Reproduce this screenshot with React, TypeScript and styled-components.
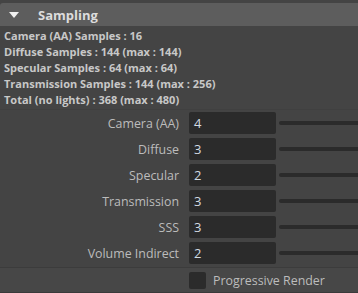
import React, { FC } from "react"
import styled, { createGlobalStyle } from "styled-components"

const GlobalStyle = createGlobalStyle`
    html, body {
        margin: 0;
        padding: 0;
        background: #444444;
        overflow: hidden;
    }
    body {
        font-family: "Open Sans", "Noto Sans", sans-serif;
    }
`

const Panel = styled.div`
    width: 358px;
    height: 293px;
    padding-top: 3px;
    box-sizing: border-box;
    background: #444444;
    display: flex;
    flex-direction: column;
`

const Header = styled.div`
    height: 23px;
    background: #5d5d5d;
    border-top-left-radius: 3px;
    display: flex;
    align-items: center;
    gap: 19px;
    padding-left: 9px;
    color: #dcdcdc;
    font-weight: 700;
    font-size: 13px;
`

const Arrow = styled.span`
    width: 0;
    height: 0;
    border-left: 5px solid transparent;
    border-right: 5px solid transparent;
    border-top: 6px solid #f0f0f0;
`

const Info = styled.div`
    padding: 2px 0 1px 4px;
    display: flex;
    flex-direction: column;
    border-bottom: 1px solid #404040;
`

const InfoLine = styled.div`
    height: 16px;
    line-height: 16px;
    font-size: 11px;
    font-weight: 700;
    color: #c8c8c8;
    white-space: nowrap;
`

const Rows = styled.div`
    padding-top: 2px;
    display: flex;
    flex-direction: column;
    gap: 4px;
`

const Row = styled.div`
    display: grid;
    grid-template-columns: 179px 87px 1fr;
    column-gap: 10px;
    align-items: center;
    height: 22px;
`

const Label = styled.div`
    text-align: right;
    font-size: 12.4px;
    color: #bcbcbc;
`

const Field = styled.div`
    height: 22px;
    background: #2b2b2b;
    border-radius: 2px;
    color: #d2dae2;
    font-size: 13px;
    line-height: 22px;
    padding-left: 5px;
`

const Track = styled.div`
    height: 4px;
    background: #2b2b2b;
    border-radius: 2px 0 0 2px;
    margin-left: -7px;
`

const Footer = styled.div`
    margin-top: 3px;
    flex: 1;
    border-top: 1px solid #3c3c3c;
    border-bottom: 1px solid #3a3a3a;
    background: #474747;
    display: flex;
    align-items: center;
    padding-left: 189px;
    gap: 7px;
`

const Check = styled.span`
    width: 17px;
    height: 17px;
    border-radius: 2px;
    background: #2b2b2b;
`

const CheckLabel = styled.span`
    font-size: 12.4px;
    color: #bcbcbc;
`

const info = [
    "Camera (AA) Samples : 16",
    "Diffuse Samples : 144 (max : 144)",
    "Specular Samples : 64 (max : 64)",
    "Transmission Samples : 144 (max : 256)",
    "Total (no lights) : 368 (max : 480)"
]

const fields: [string, string][] = [
    ["Camera (AA)", "4"],
    ["Diffuse", "3"],
    ["Specular", "2"],
    ["Transmission", "3"],
    ["SSS", "3"],
    ["Volume Indirect", "2"]
]

const App: FC = () => (
    <Panel>
        <GlobalStyle />
        <Header>
            <Arrow />
            <span>Sampling</span>
        </Header>
        <Info>
            {info.map(line => <InfoLine key={line}>{line}</InfoLine>)}
        </Info>
        <Rows>
            {fields.map(([label, value]) => (
                <Row key={label}>
                    <Label>{label}</Label>
                    <Field>{value}</Field>
                    <Track />
                </Row>
            ))}
        </Rows>
        <Footer>
            <Check />
            <CheckLabel>Progressive Render</CheckLabel>
        </Footer>
    </Panel>
)

export default App
